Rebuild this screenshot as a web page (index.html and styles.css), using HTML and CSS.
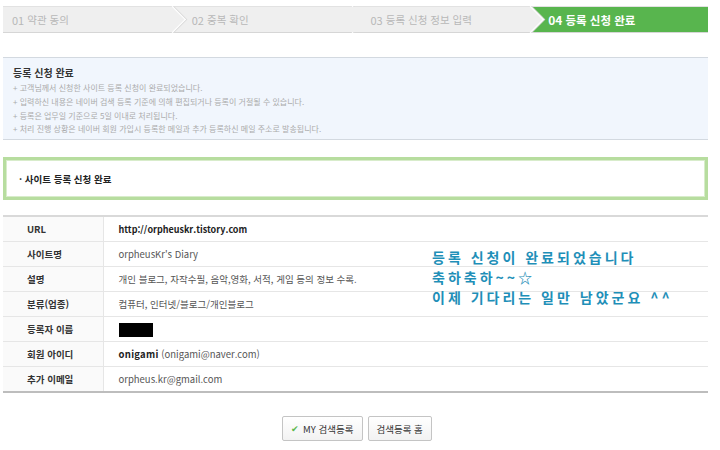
FILE: index.html
```html
<!DOCTYPE html>
<html lang="ko">
<head>
    <meta charset="UTF-8">
    <title>사이트 등록 신청 완료</title>
    <link rel="stylesheet" href="styles.css">
</head>
<body>
    <div class="wrap">
        <ol class="steps">
            <li class="step"><span class="num">01</span> 약관 동의</li>
            <li class="step"><span class="num">02</span> 중복 확인</li>
            <li class="step step-prev"><span class="num">03</span> 등록 신청 정보 입력</li>
            <li class="step step-on"><span class="num">04</span> 등록 신청 완료</li>
        </ol>

        <div class="notice">
            <h3 class="notice-title">등록 신청 완료</h3>
            <ul class="notice-list">
                <li>+ 고객님께서 신청한 사이트 등록 신청이 완료되었습니다.</li>
                <li>+ 입력하신 내용은 네이버 검색 등록 기준에 의해 편집되거나 등록이 거절될 수 있습니다.</li>
                <li>+ 등록은 업무일 기준으로 5일 이내로 처리됩니다.</li>
                <li>+ 처리 진행 상황은 네이버 회원 가입시 등록한 메일과 추가 등록하신 메일 주소로 발송됩니다.</li>
            </ul>
        </div>

        <div class="done-box">· 사이트 등록 신청 완료</div>

        <div class="info">
            <table class="info-table">
                <tr><th>URL</th><td class="strong url">http://orpheuskr.tistory.com</td></tr>
                <tr><th>사이트명</th><td>orpheusKr's Diary</td></tr>
                <tr><th>설명</th><td>개인 블로그, 자작수필, 음악,영화, 서적, 게임 등의 정보 수록.</td></tr>
                <tr><th>분류(업종)</th><td>컴퓨터, 인터넷/블로그/개인블로그</td></tr>
                <tr><th>등록자 이름</th><td><span class="hidden-name"></span></td></tr>
                <tr><th>회원 아이디</th><td><b class="strong">onigami</b> (onigami@naver.com)</td></tr>
                <tr><th>추가 이메일</th><td>orpheus.kr@gmail.com</td></tr>
            </table>
            <div class="memo">
                등록 신청이 완료되었습니다<br>
                축하축하~~☆<br>
                이제 기다리는 일만 남았군요 ^^
            </div>
        </div>

        <div class="btns">
            <a class="btn"><span class="check">✔</span> MY 검색등록</a>
            <a class="btn">검색등록 홈</a>
        </div>
    </div>
</body>
</html>
```

FILE: styles.css
```css
body {
    margin: 0;
    padding: 0;
    background: #fff;
    font-family: "Noto Sans CJK KR", "Liberation Sans", sans-serif;
    color: #333;
}
.wrap {
    width: 705px;
    padding: 6px 0 0 3px;
}

/* steps */
.steps {
    display: flex;
    margin: 0;
    padding: 0;
    list-style: none;
    height: 27px;
    background: #efefef;
    border-top: 1px solid #e2e2e2;
    border-bottom: 1px solid #d6d6d6;
    box-sizing: border-box;
}
.step {
    flex: 1;
    position: relative;
    display: flex;
    align-items: center;
    padding-left: 9px;
    font-size: 10.5px;
    color: #b8b8b8;
    background: #efefef;
    z-index: 3;
}
.step:nth-child(2) { z-index: 2; padding-left: 20px; }
.step:nth-child(3) { z-index: 2; padding-left: 19px; }
.step .num {
    font-size: 11px;
    margin-right: 3px;
}
.step::after {
    content: "";
    position: absolute;
    right: -10px;
    top: 3px;
    width: 18px;
    height: 18px;
    background: inherit;
    border-top: 1px solid #fff;
    border-right: 1px solid #fff;
    box-shadow: 1px -1px 0 #dadada;
    transform: rotate(45deg);
}
.step-on {
    background: #58b54e;
    color: #fff;
    font-weight: 700;
    font-size: 11.5px;
    padding-left: 18px;
    z-index: 1;
}
.step-on .num {
    font-size: 12px;
}
.step-on::after {
    display: none;
}

/* notice */
.notice {
    margin-top: 24px;
    background: #f1f6fd;
    border-top: 1px solid #d3d9e0;
    border-bottom: 1px solid #d3d9e0;
    padding: 7px 10px 6px;
    height: 83px;
    box-sizing: border-box;
}
.notice-title {
    margin: 0 0 1px;
    font-size: 10px;
    font-weight: 700;
    color: #333;
}
.notice-list {
    margin: 0;
    padding: 0;
    list-style: none;
    font-size: 8px;
    line-height: 13.8px;
    color: #ababab;
}

/* done box */
.done-box {
    margin-top: 17px;
    height: 43px;
    box-sizing: border-box;
    border: 3px solid #b7dd9f;
    box-shadow: inset 0 0 0 1px #d8eccb;
    padding: 0 13px;
    display: flex;
    align-items: center;
    font-size: 9.5px;
    font-weight: 700;
    color: #222;
}

/* table */
.info {
    position: relative;
    margin-top: 15px;
}
.info-table {
    width: 100%;
    border-collapse: collapse;
    border-top: 2px solid #d9d9d9;
    border-bottom: 2px solid #bdbdbd;
    font-size: 9.5px;
}
.info-table th,
.info-table td {
    height: 24px;
    padding: 0;
    border-bottom: 1px solid #e6e6e6;
    text-align: left;
}
.info-table tr:last-child th,
.info-table tr:last-child td {
    border-bottom: 0;
}
.info-table th {
    width: 100px;
    padding-left: 24px;
    box-sizing: border-box;
    background: #fafafa;
    border-right: 1px solid #e6e6e6;
    font-weight: 700;
    color: #333;
}
.info-table td {
    padding-left: 15px;
    color: #555;
}
.info-table .strong {
    font-weight: 700;
    color: #222;
    letter-spacing: 0.3px;
}
.info-table .url {
    letter-spacing: 0;
    font-size: 9px;
}
.hidden-name {
    display: inline-block;
    width: 34px;
    height: 14px;
    background: #000;
    vertical-align: middle;
}
.memo {
    position: absolute;
    left: 429px;
    top: 32px;
    font-size: 14px;
    line-height: 20px;
    letter-spacing: 3px;
    font-weight: 700;
    color: #1f8fb8;
}

/* buttons */
.btns {
    display: flex;
    justify-content: center;
    gap: 5px;
    margin-top: 23px;
    padding-left: 3px;
}
.btn {
    display: inline-flex;
    align-items: center;
    height: 25px;
    padding: 0 8px;
    box-sizing: border-box;
    border: 1px solid #c4c4c4;
    border-radius: 2px;
    background: linear-gradient(#fff, #f2f2f2);
    font-size: 9.5px;
    color: #333;
    cursor: pointer;
}
.check {
    color: #5cb84f;
    font-size: 9px;
    margin-right: 4px;
}
```
